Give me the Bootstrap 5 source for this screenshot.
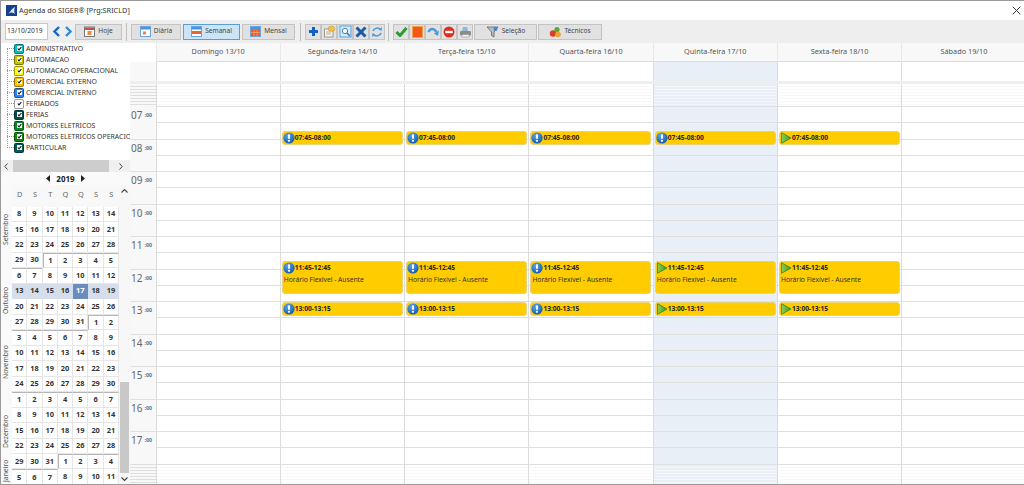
<!DOCTYPE html>
<html lang="pt">
<head>
<meta charset="utf-8">
<title>Agenda do SIGER</title>
<link href="https://cdn.jsdelivr.net/npm/bootstrap@5.3.0/dist/css/bootstrap.min.css" rel="stylesheet">
<style>
html,body{margin:0;height:485px;width:1024px;overflow:hidden;background:#fff}
body{font-family:"Noto Sans","DejaVu Sans",sans-serif;font-size:7.5px;color:#333;line-height:1}
.win{width:1024px;height:485px;border:1px solid #9a9a9a;border-top:1px solid #999;border-right:0;overflow:hidden}
.win>*{flex:none}
.ttl{height:19px;padding-left:5px;font-size:7.3px;color:#333}
.ttl svg{margin-right:2px}
.ttl svg.xclose{margin-right:3px}
.tbar{height:23px;background:#eee;padding-left:4px}
.datebox{width:43px;height:17px;background:#fff;border:1px solid #c8c8c8;font-size:6.7px;padding-left:1px;color:#333;margin-right:2px}
.tb{height:16px;border:1px solid #c4c4c4;background:#e1e1e1;border-radius:0;padding:0;font-size:6.6px;color:#444;line-height:1;gap:3px;--bs-btn-padding-x:0;--bs-btn-padding-y:0;--bs-btn-font-size:6.6px}
.tb.on{background:#cce4f7;border-color:#5d9dd3}
.tb.sq{width:16px}
.tb.wd-h{width:47px;margin-left:1px}
.tb.wd-d{width:50px}
.tb.wd-s{width:57px}
.tb.wd-m{width:53px}
.tb.wd-se{width:63px;margin-left:1px}
.tb.wd-te{width:64px;margin-left:1px}
.arw{width:12px;height:16px;border:0;background:transparent;padding:0}
.vsep{width:1px;height:18px;background:#bdbdbd;margin:0 4px}
.vsep.s2{margin:0 4px 0 5px}
.vsep.s3{margin:0 4px 0 3px}
.viewgrp{gap:2px}
.mainrow{height:441px}
.side{width:129px;flex:none;overflow:hidden}
.side>*{flex:none}
.tree{height:117px;position:relative;overflow:hidden;white-space:nowrap}
.tree:before{content:"";position:absolute;left:6px;top:5px;height:100px;border-left:1px dotted #999}
.tnode{height:11px;padding-left:13px;color:#333;font-size:6.9px;position:relative}
.tnode:before{content:"";position:absolute;left:6px;top:5px;width:7px;border-top:1px dotted #999}
.tnode span:last-child{padding-top:1px}
.cbox{width:10px;height:10px;border-radius:2px;border:1px solid rgba(0,0,0,.4);margin-right:2px;flex:none;display:flex;align-items:center;justify-content:center}
.cbox i{display:block;width:5px;height:5px;background:#fff}
.cbox svg{display:block}
.hsb{height:12px;background:#f0f0f0;padding:0 3px;color:#555}
.hthumb{width:96px;height:100%;background:#cdcdcd;margin:0 5px}
.ynav{height:13px;background:#fafafa;gap:3px;font-weight:700;font-size:8px;color:#222}
.ynav span{background:#fff;padding:2px 3px}
.calwrap{height:299px;overflow:hidden}
.mstrip{width:11px;flex:none;background:#f9f9f9}
.mgap1{height:21.5px}
.mgap2{height:18px}
.dowh{height:21.5px;background:#f8f8f8;color:#666;font-size:7.4px;padding-bottom:2px}
.dowh div{width:15.3px;text-align:center}
.calgrid{width:107px;flex:none}
.mrow{height:15.47px}
.dcell{width:15.3px;height:15.47px;flex:none;border-right:1px solid #e6e6e6;border-bottom:1px solid #e6e6e6;font-weight:700;font-size:7.4px;color:#333;background:#fff}
.dcell.wk{background:#d5deea;border-color:#d5deea}
.dcell.sel{background:#6b8dbd;color:#fff;border-color:#6b8dbd}
.dcell.mt{border-top:1px solid #b5b5b5}
.dcell.ml{border-left:1px solid #b5b5b5}
.mlabel{writing-mode:vertical-rl;transform:rotate(180deg);font-size:6.8px;color:#555;width:11px;text-align:center;white-space:nowrap;flex-shrink:0}
.m-se{height:44px}
.m-ou,.m-no{height:62px}
.m-de{height:76px}
.m-ja{height:4px}
.vsb{width:11px;flex:none;background:#f7f7f7;position:relative}
.vthumb{position:absolute;left:1px;width:9px;top:197px;height:91px;background:#c8c8c8}
.vup,.vdn{position:absolute;left:1px}
.vup{top:3px}
.vdn{top:291px}
.sch{width:895px;flex:none;overflow:hidden}
.sch>*{flex:none}
.headrow{height:19px;padding-left:25.5px}
.hcell{width:124.3px;flex:none;background:#f8f8f8;border-left:1px solid #e8e8e8;font-size:7.3px;color:#555;height:19px;border-bottom:1px solid #dcdcdc}
.alld{height:19px;background:#fff}
.alld .tc{width:25.5px;background:#f8f8f8;flex:none}
.alld .dc{width:124.3px;flex:none;border-left:1px solid #dcdcdc}
.today{background:#e8eff7!important}
.band{height:3px;background:#eee}
.tcol{width:25.5px;flex:none;background:#f8f8f8;height:400px;overflow:hidden}
.dcol{width:124.3px;flex:none;border-left:1px solid #dcdcdc;position:relative;height:400px;overflow:hidden}
.off{height:23px;background:repeating-linear-gradient(#fff 0 2px,#f8f8f8 2px 3px)}
.today .off{background:repeating-linear-gradient(#e8eff7 0 2px,#f4f7fb 2px 3px)}
.tcol .off{background:repeating-linear-gradient(#f8f8f8 0 2px,#dedede 2px 3px)}
.dcol .off:first-child{border-bottom:1px solid #dfdfdf}
.slot{height:16.25px;border-bottom:1px solid #dfdfdf;box-sizing:border-box}
.hr{height:32.5px;border-bottom:1px solid #dfdfdf;padding:3px 0 0 1px;color:#666;font-size:10px;box-sizing:border-box}
.hr sup{font-size:5.2px;color:#55708f;top:-2px;position:relative;vertical-align:baseline;margin-left:2px;font-weight:700}
.ev{position:absolute;left:1px;width:121px;background:#fc0;border:1px solid #e9d27a;border-radius:3px;padding:0;color:#222;overflow:hidden}
.evt{height:12px;font-weight:700;font-size:6.6px;gap:0;color:#222}
.evd{font-size:6.7px;margin-top:3px;padding-left:1px;color:#333}
</style>
</head>
<body>
<svg width="0" height="0" class="position-absolute">
<defs>
<radialGradient id="gb" cx=".4" cy=".3" r=".8"><stop offset="0" stop-color="#5aa9ee"/><stop offset="1" stop-color="#0b4fa8"/></radialGradient>
<linearGradient id="gg" x1="0" x2="1"><stop offset="0" stop-color="#8fd04a"/><stop offset="1" stop-color="#3b9a23"/></linearGradient>
<symbol id="ib" viewBox="0 0 12 12"><circle cx="6" cy="6" r="5.6" fill="url(#gb)"/><rect x="5" y="2.3" width="2" height="4.6" rx=".8" fill="#fff"/><circle cx="6" cy="8.8" r="1.1" fill="#fff"/></symbol>
<symbol id="ig" viewBox="0 0 12 12"><path d="M1.5 .7 11 6 1.5 11.3Z" fill="url(#gg)" stroke="#3a7f20" stroke-width=".8"/></symbol>
<symbol id="ck" viewBox="0 0 6 6"><path d="M1 3 2.4 4.6 5.2 1.4" fill="none" stroke="#111" stroke-width="1.3"/></symbol>
</defs>
</svg>
<div class="win d-flex flex-column">
  <div class="ttl d-flex align-items-center">
    <svg width="11" height="11" viewBox="0 0 11 11"><rect width="11" height="11" fill="#17408b"/><path d="M2 9C4 8 5 4 9 2 8 5 8 7 9 9 7 7 5 7 2 9Z" fill="#dfe9fb"/></svg>
    <span>Agenda do SIGER® [Prg:SRICLD]</span>
    <svg class="xclose ms-auto" width="9" height="9" viewBox="0 0 9 9"><path d="M.7.7 8.3 8.3M8.3.7.7 8.3" stroke="#333" stroke-width="1"/></svg>
  </div>
  <div class="tbar d-flex align-items-center">
    <div class="datebox d-flex align-items-center">13/10/2019</div>
    <button class="arw d-flex align-items-center justify-content-center"><svg width="9" height="11" viewBox="0 0 9 11"><path d="M7 1 2.5 5.5 7 10" fill="none" stroke="#1565c9" stroke-width="2.4"/></svg></button>
    <button class="arw d-flex align-items-center justify-content-center"><svg width="9" height="11" viewBox="0 0 9 11"><path d="M2 1 6.5 5.5 2 10" fill="none" stroke="#2b8ddd" stroke-width="2.4"/></svg></button>
    <button class="btn tb wd-h d-flex align-items-center justify-content-center"><svg width="11" height="11" viewBox="0 0 11 11"><rect x=".5" y="1" width="10" height="9.5" fill="#fff" stroke="#777"/><rect x="1" y="1.5" width="9" height="2.5" fill="#c9503a"/><rect x="3.5" y="5" width="4" height="4" fill="#e88a4a"/></svg>Hoje</button>
    <div class="vsep"></div>
    <div class="d-flex viewgrp">
      <button class="btn tb wd-d d-flex align-items-center justify-content-center"><svg width="11" height="11" viewBox="0 0 11 11"><rect x=".5" y=".5" width="10" height="10" fill="#fff" stroke="#6aa5e0"/><rect x="1" y="1" width="9" height="2.5" fill="#4b94dd"/><rect x="3" y="5.5" width="3" height="3" fill="#ef7f4f"/></svg>Diária</button>
      <button class="btn tb on wd-s d-flex align-items-center justify-content-center"><svg width="11" height="11" viewBox="0 0 11 11"><rect x=".5" y=".5" width="10" height="10" fill="#fff" stroke="#6aa5e0"/><rect x="1" y="1" width="9" height="2.5" fill="#4b94dd"/><rect x="1" y="5" width="9" height="3" fill="#e8633a"/></svg>Semanal</button>
      <button class="btn tb wd-m d-flex align-items-center justify-content-center"><svg width="11" height="11" viewBox="0 0 11 11"><rect x=".5" y=".5" width="10" height="10" fill="#f0592b" stroke="#6aa5e0"/><rect x="1" y="1" width="9" height="2.5" fill="#4b94dd"/><path d="M1 6.5H10M4 3.5V10M7 3.5V10" stroke="#f9a56e" stroke-width=".7"/></svg>Mensal</button>
    </div>
    <div class="vsep s2"></div>
    <div class="d-flex">
      <button class="btn tb sq d-flex align-items-center justify-content-center"><svg width="11" height="11" viewBox="0 0 11 11"><path d="M5.5 1v9M1 5.5h9" stroke="#0e62c8" stroke-width="3"/></svg></button>
      <button class="btn tb sq d-flex align-items-center justify-content-center"><svg width="13" height="13" viewBox="0 0 13 13"><rect x="1.5" y="4" width="8.5" height="8" fill="#f3f3f3" stroke="#9a9a9a"/><path d="M3 7h5M3 9h5" stroke="#c0b080"/><ellipse cx="8.5" cy="3.7" rx="3.4" ry="2.6" fill="#f0c050" stroke="#c09020" stroke-width=".5"/></svg></button>
      <button class="btn tb sq d-flex align-items-center justify-content-center"><svg width="13" height="13" viewBox="0 0 13 13"><rect x="1" y="1" width="11" height="11" fill="#d7ecfb" stroke="#4aa3e8"/><circle cx="6" cy="6" r="2.7" fill="#fff" stroke="#5a7fa0"/><path d="M8 8 11 11" stroke="#5a6f8a" stroke-width="1.4"/></svg></button>
      <button class="btn tb sq d-flex align-items-center justify-content-center"><svg width="12" height="12" viewBox="0 0 12 12"><path d="M1.5 1.5 10.5 10.5M10.5 1.5 1.5 10.5" stroke="#1a5ba8" stroke-width="3"/></svg></button>
      <button class="btn tb sq d-flex align-items-center justify-content-center"><svg width="12" height="12" viewBox="0 0 12 12"><path d="M2 5C3 2 7 1 9.5 3.5M10 7C9 10 5 11 2.5 8.5" fill="none" stroke="#4d9bdc" stroke-width="1.6"/><path d="M11 1 10.5 5 7.5 3.5ZM1 11 1.5 7 4.5 8.5Z" fill="#4d9bdc"/></svg></button>
    </div>
    <div class="vsep s3"></div>
    <div class="d-flex">
      <button class="btn tb sq d-flex align-items-center justify-content-center"><svg width="13" height="11" viewBox="0 0 13 11"><path d="M1.5 6 5 9.5 11.5 2" fill="none" stroke="#2f9a2f" stroke-width="3"/></svg></button>
      <button class="btn tb sq d-flex align-items-center justify-content-center"><svg width="11" height="12" viewBox="0 0 11 12"><rect x=".5" y=".5" width="10" height="11" fill="#f4561c" stroke="#f0a040"/></svg></button>
      <button class="btn tb sq d-flex align-items-center justify-content-center"><svg width="13" height="11" viewBox="0 0 13 11"><path d="M1.5 6C3 2 7 2 9.5 6" fill="none" stroke="#4d9bdc" stroke-width="2.6"/><path d="M12 4.5 11 10 6.8 7.5Z" fill="#4d9bdc"/></svg></button>
      <button class="btn tb sq d-flex align-items-center justify-content-center"><svg width="12" height="12" viewBox="0 0 12 12"><circle cx="6" cy="6" r="5.5" fill="#e02b20"/><rect x="2.3" y="4.8" width="7.4" height="2.4" fill="#fff"/></svg></button>
      <button class="btn tb sq d-flex align-items-center justify-content-center"><svg width="13" height="12" viewBox="0 0 13 12"><path d="M4 1h4l1 4H3Z" fill="#8db7dc"/><rect x="1" y="5" width="11" height="4.5" rx="1.2" fill="#8c8c8c"/><rect x="3" y="8.5" width="7" height="2.5" fill="#f2f2f2" stroke="#888" stroke-width=".5"/></svg></button>
      <button class="btn tb wd-se d-flex align-items-center justify-content-center"><svg width="13" height="12" viewBox="0 0 13 12"><path d="M1 1h11L8 6v5L5.5 9.5V6Z" fill="#b9bec4" stroke="#555" stroke-width=".7"/><circle cx="9.5" cy="3" r="2" fill="#3f88cf"/></svg>Seleção</button>
      <button class="btn tb wd-te d-flex align-items-center justify-content-center"><svg width="12" height="12" viewBox="0 0 12 12"><circle cx="4" cy="7.5" r="3.2" fill="#d8402b"/><circle cx="8" cy="3.5" r="2.6" fill="#5aa83a"/><circle cx="9" cy="8.5" r="2.8" fill="#f0a030"/></svg>Técnicos</button>
    </div>
  </div>
  <div class="mainrow d-flex">
    <div class="side d-flex flex-column">
      <div class="tree" id="tree"></div>
      <div class="hsb d-flex align-items-center">
        <svg width="4" height="7" viewBox="0 0 4 7"><path d="M3.5 .5.8 3.5 3.5 6.5" fill="none" stroke="#444" stroke-width="1"/></svg>
        <div class="hthumb"></div>
        <svg class="ms-auto me-1" width="4" height="7" viewBox="0 0 4 7"><path d="M.5 .5 3.2 3.5.5 6.5" fill="none" stroke="#444" stroke-width="1"/></svg>
      </div>
      <div class="ynav d-flex align-items-center justify-content-center">
        <svg width="4" height="7" viewBox="0 0 4 7"><path d="M4 0V7L0 3.5Z" fill="#222"/></svg><span>2019</span><svg width="4" height="7" viewBox="0 0 4 7"><path d="M0 0V7L4 3.5Z" fill="#222"/></svg>
      </div>
      <div class="calwrap d-flex">
        <div class="mstrip d-flex flex-column">
          <div class="mgap1 flex-shrink-0"></div>
          <div class="mlabel m-se d-flex align-items-center justify-content-center">Setembro</div>
          <div class="mgap2 flex-shrink-0"></div>
          <div class="mlabel m-ou d-flex align-items-center justify-content-center">Outubro</div>
          <div class="mlabel m-no d-flex align-items-center justify-content-center">Novembro</div>
          <div class="mlabel m-de d-flex align-items-center justify-content-center">Dezembro</div>
          <div class="mlabel m-ja d-flex align-items-center justify-content-center">Janeiro</div>
        </div>
        <div class="calgrid">
          <div class="dowh d-flex align-items-center"><div>D</div><div>S</div><div>T</div><div>Q</div><div>Q</div><div>S</div><div>S</div></div>
          <div id="days"></div>
        </div>
        <div class="vsb">
          <svg class="vup" width="9" height="6" viewBox="0 0 9 6"><path d="M1.5 4.5 4.5 1.5 7.5 4.5" fill="none" stroke="#444" stroke-width="1.1"/></svg>
          <div class="vthumb"></div>
          <svg class="vdn" width="9" height="6" viewBox="0 0 9 6"><path d="M1.5 1.5 4.5 4.5 7.5 1.5" fill="none" stroke="#444" stroke-width="1.1"/></svg>
        </div>
      </div>
    </div>
    <div class="sch d-flex flex-column">
      <div class="headrow d-flex" id="head"></div>
      <div class="alld d-flex" id="alld"></div>
      <div class="band"></div>
      <div class="d-flex" id="body"></div>
    </div>
  </div>
</div>
<script>
(function(){
var items=[["ADMINISTRATIVO","#00c2c2"],["AUTOMACAO","#c4c400"],["AUTOMACAO OPERACIONAL","#ffff00"],["COMERCIAL EXTERNO","#ffc000"],["COMERCIAL INTERNO","#2a86f5"],["FERIADOS","#ffffff"],["FERIAS","#00504f"],["MOTORES ELETRICOS","#0a8a2a"],["MOTORES ELETRICOS OPERACIONAL","#0a8a0a"],["PARTICULAR","#005a58"]];
document.getElementById('tree').innerHTML=items.map(function(t){return '<div class="tnode d-flex align-items-center"><span class="cbox" style="background:'+t[1]+'"><i><svg width="5" height="5"><use href="#ck"/></svg></i></span><span>'+t[0]+'</span></div>'}).join('');
var start=new Date(2019,8,8),h='';
for(var r=0;r<18;r++){h+='<div class="mrow d-flex">';for(var c=0;c<7;c++){var d=new Date(start.getTime()+(r*7+c+0.1)*864e5),n=d.getDate(),m=d.getMonth();
var cl='dcell d-flex align-items-center justify-content-center';
if(m==9&&n>=13&&n<=19)cl+=n==17?' sel':' wk';
if(n<=7&&r>0)cl+=' mt';if(n==1&&c>0)cl+=' ml';
h+='<div class="'+cl+'">'+n+'</div>'}h+='</div>'}
document.getElementById('days').innerHTML=h;
var names=["Domingo 13/10","Segunda-feira 14/10","Terça-feira 15/10","Quarta-feira 16/10","Quinta-feira 17/10","Sexta-feira 18/10","Sábado 19/10"];
document.getElementById('head').innerHTML=names.map(function(n){return '<div class="hcell d-flex align-items-center justify-content-center">'+n+'</div>'}).join('');
document.getElementById('alld').innerHTML='<div class="tc"></div>'+names.map(function(n,i){return '<div class="dc'+(i==4?' today':'')+'"></div>'}).join('');
var tc='<div class="tcol"><div class="off"></div>';
for(var i=7;i<=17;i++)tc+='<div class="hr">'+(i<10?'0':'')+i+'<sup>:00</sup></div>';
tc+='<div class="off"></div></div>';
var slots='<div class="off"></div>';for(i=0;i<22;i++)slots+='<div class="slot"></div>';slots+='<div class="off"></div>';
function evTop(t){return 23+(t-7)*32.5}
var evs=[[7.75,13.5,'07:45-08:00'],[11.75,33,'11:45-12:45','Horário Flexível - Ausente'],[13,13.5,'13:00-13:15']];
var ic={1:'bbb',2:'bbb',3:'bbb',4:'bgg',5:'ggg'};
var b=tc;
for(i=0;i<7;i++){b+='<div class="dcol'+(i==4?' today':'')+'">'+slots;
 if(ic[i])evs.forEach(function(e,k){var g=ic[i][k]=='g';b+='<div class="ev" style="top:'+evTop(e[0])+'px;height:'+e[1]+'px"><div class="evt d-flex align-items-center"><svg width="12" height="12"><use href="#'+(g?'ig':'ib')+'"/></svg><span>'+e[2]+'</span></div>'+(e[3]?'<div class="evd">'+e[3]+'</div>':'')+'</div>'});
 b+='</div>'}
document.getElementById('body').innerHTML=b;
})();
</script>
</body>
</html>
